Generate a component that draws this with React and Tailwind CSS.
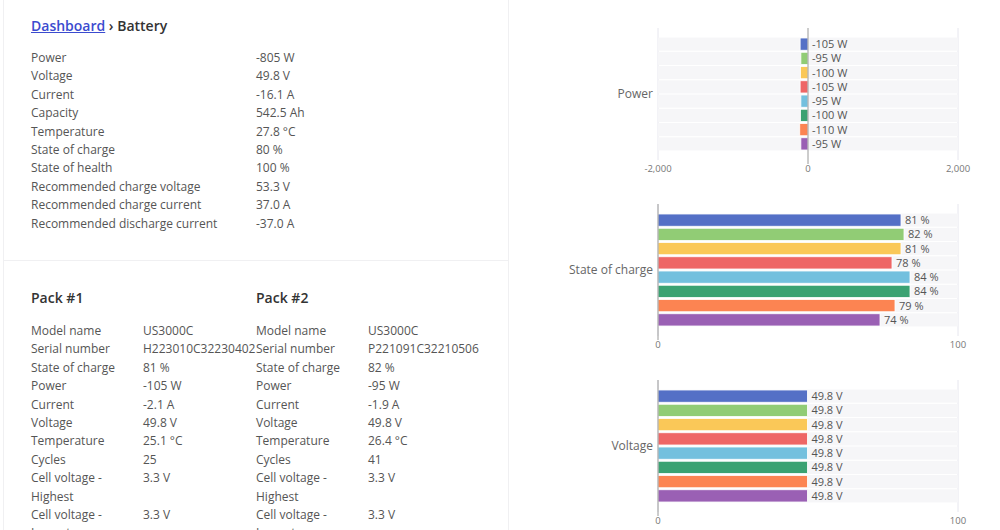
import React from 'react';

const COLORS = ['#5470c6', '#91cc75', '#fac858', '#ee6666', '#73c0de', '#3ba272', '#fc8452', '#9a60b4'];

const summary = [
  ['Power', '-805 W'],
  ['Voltage', '49.8 V'],
  ['Current', '-16.1 A'],
  ['Capacity', '542.5 Ah'],
  ['Temperature', '27.8 °C'],
  ['State of charge', '80 %'],
  ['State of health', '100 %'],
  ['Recommended charge voltage', '53.3 V'],
  ['Recommended charge current', '37.0 A'],
  ['Recommended discharge current', '-37.0 A'],
];

const packs = [
  {
    name: 'Pack #1',
    rows: [
      ['Model name', 'US3000C'],
      ['Serial number', 'H223010C32230402'],
      ['State of charge', '81 %'],
      ['Power', '-105 W'],
      ['Current', '-2.1 A'],
      ['Voltage', '49.8 V'],
      ['Temperature', '25.1 °C'],
      ['Cycles', '25'],
      ['Cell voltage - Highest', '3.3 V'],
      ['Cell voltage - Lowest', '3.3 V'],
    ],
  },
  {
    name: 'Pack #2',
    rows: [
      ['Model name', 'US3000C'],
      ['Serial number', 'P221091C32210506'],
      ['State of charge', '82 %'],
      ['Power', '-95 W'],
      ['Current', '-1.9 A'],
      ['Voltage', '49.8 V'],
      ['Temperature', '26.4 °C'],
      ['Cycles', '41'],
      ['Cell voltage - Highest', '3.3 V'],
      ['Cell voltage - Lowest', '3.3 V'],
    ],
  },
];

const power = [-105, -95, -100, -105, -95, -100, -110, -95];
const soc = [81, 82, 81, 78, 84, 84, 79, 74];
const voltage = [49.8, 49.8, 49.8, 49.8, 49.8, 49.8, 49.8, 49.8];

const X0 = 149;
const X1 = 449;
const ROW_TOP = 37;
const BAND = 14.25;

const BarChart = ({ title, values, unit, min, max, ticks, fmt }) => {
  const sx = (v) => X0 + ((v - min) / (max - min)) * (X1 - X0);
  const zero = sx(0);
  return (
    <svg width="491" height="176" className="block">
      <line x1={X0} y1="28" x2={X0} y2="160" stroke="#e6e6ee" />
      <line x1={X1} y1="28" x2={X1} y2="160" stroke="#e6e6ee" />
      {values.map((v, i) => (
        <rect key={'s' + i} x={X0} y={ROW_TOP + i * BAND + 0.6} width={X1 - X0} height={BAND - 1.2} fill="#f6f6f8" />
      ))}
      {values.map((v, i) => {
        const a = Math.min(sx(v), zero);
        const b = Math.max(sx(v), zero);
        const y = ROW_TOP + i * BAND + 1;
        return (
          <g key={'b' + i}>
            <rect x={a} y={y} width={b - a} height={BAND - 2} fill={COLORS[i]} stroke="#fff" strokeWidth="0.8" />
            <text x={Math.max(sx(v), zero) + 4} y={y + (BAND - 2) / 2 + 4} fontSize="11" fill="#555">
              {fmt(v)} {unit}
            </text>
          </g>
        );
      })}
      <line x1={zero} y1="28" x2={zero} y2="160" stroke="#9a9a9a" />
      <line x1={zero} y1="160" x2={zero} y2="164" stroke="#9a9a9a" />
      <text x="144" y={ROW_TOP + 4 * BAND + 4} fontSize="12" fill="#666" textAnchor="end">
        {title}
      </text>
      {ticks.map((t) => (
        <text key={t.v} x={sx(t.v)} y="172" fontSize="9.5" fill="#777" textAnchor="middle">
          {t.label}
        </text>
      ))}
    </svg>
  );
};

const Row = ({ label, value, labelWidth }) => (
  <div className="flex text-[12px] leading-[18.4px] text-[#555]">
    <div className="shrink-0" style={{ width: labelWidth }}>{label}</div>
    <div className="whitespace-nowrap">{value}</div>
  </div>
);

const App = () => {
  return (
    <div className="flex h-[530px] w-[1000px] overflow-hidden bg-white" style={{ fontFamily: '"Open Sans", sans-serif' }}>
      <div className="ml-[3px] flex w-[506px] shrink-0 flex-col">
        <div className="h-[261px] shrink-0 border-x border-b border-[#f0f0f2] pl-[27px] pt-[17px]">
          <h1 className="mb-[14px] text-[14px] font-semibold leading-[18px] text-[#333]">
            <a href="#" className="text-[#3b4bcf] underline">Dashboard</a> › Battery
          </h1>
          {summary.map(([l, v]) => (
            <Row key={l} label={l} value={v} labelWidth={225} />
          ))}
        </div>
        <div className="flex-1 border-x border-[#f0f0f2] pl-[27px] pt-[28px]">
          <div className="grid grid-cols-[225px_225px]">
            {packs.map((p) => (
              <div key={p.name}>
                <h2 className="mb-[15px] text-[14px] font-semibold leading-[18px] text-[#333]">{p.name}</h2>
                {p.rows.map(([l, v]) => (
                  <Row key={l} label={l} value={v} labelWidth={112} />
                ))}
              </div>
            ))}
          </div>
        </div>
      </div>
      <div className="flex flex-1 flex-col">
        <BarChart
          title="Power"
          values={power}
          unit="W"
          min={-2000}
          max={2000}
          fmt={(v) => v}
          ticks={[
            { v: -2000, label: '-2,000' },
            { v: 0, label: '0' },
            { v: 2000, label: '2,000' },
          ]}
        />
        <BarChart
          title="State of charge"
          values={soc}
          unit="%"
          min={0}
          max={100}
          fmt={(v) => v}
          ticks={[
            { v: 0, label: '0' },
            { v: 100, label: '100' },
          ]}
        />
        <BarChart
          title="Voltage"
          values={voltage}
          unit="V"
          min={0}
          max={100}
          fmt={(v) => v.toFixed(1)}
          ticks={[
            { v: 0, label: '0' },
            { v: 100, label: '100' },
          ]}
        />
      </div>
    </div>
  );
};

export default App;
